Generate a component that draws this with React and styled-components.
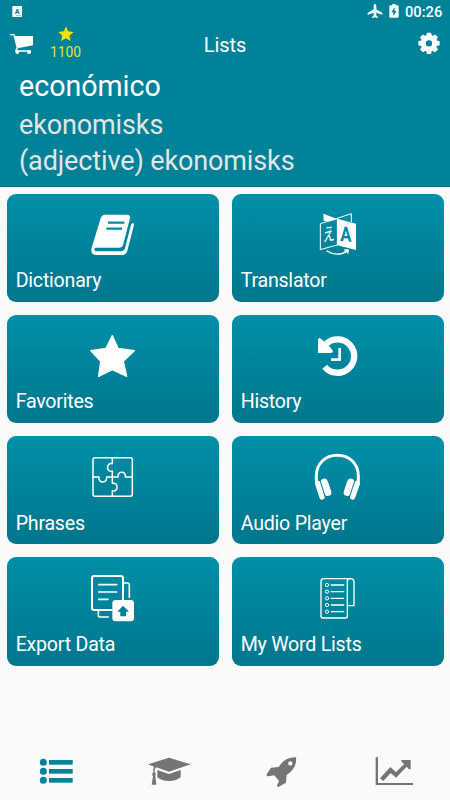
import React from "react";
import styled, { createGlobalStyle } from "styled-components";

const GlobalStyle = createGlobalStyle`
  body {
    margin: 0;
    background: #fafafa;
    font-family: Roboto, sans-serif;
  }
  svg {
    display: block;
  }
`;

const Screen = styled.div`
  width: 450px;
  height: 800px;
  display: flex;
  flex-direction: column;
  overflow: hidden;
  background: #fafafa;
`;

const Header = styled.header`
  height: 187px;
  box-sizing: border-box;
  background: #008299;
  border-bottom: 1px solid #00728c;
  color: #fff;
`;

const StatusBar = styled.div`
  height: 24px;
  box-sizing: border-box;
  padding: 0 7px 0 10px;
  display: flex;
  align-items: center;
  justify-content: space-between;
`;

const StatusIcons = styled.div`
  display: flex;
  align-items: center;
  gap: 3px;
`;

const Clock = styled.span`
  width: 38px;
  font-size: 14.7px;
  font-weight: 500;
  line-height: 24px;
  white-space: nowrap;
`;

const Toolbar = styled.div`
  height: 42px;
  display: grid;
  grid-template-columns: 100px 1fr 100px;
`;

const ToolbarLeft = styled.div`
  display: flex;
`;

const Points = styled.div`
  width: 41px;
  display: flex;
  flex-direction: column;
  align-items: center;
  color: #f0df35;
  font-size: 13.8px;
  line-height: 17px;
`;

const Title = styled.h1`
  margin: 0;
  text-align: center;
  font-size: 20px;
  font-weight: 400;
  letter-spacing: -0.1px;
  line-height: 42px;
`;

const ToolbarRight = styled.div`
  display: flex;
  justify-content: flex-end;
`;

const Word = styled.div`
  padding-left: 19px;
  font-size: 28.6px;
  line-height: 41px;
`;

const Meaning = styled.div`
  padding-left: 19px;
  color: #e2e6e7;
  font-size: 27px;
  letter-spacing: -0.13px;
  line-height: 36px;
`;

const Grid = styled.main`
  flex: 1;
  padding: 6.6px 6.5px 0;
  display: grid;
  grid-template-columns: 1fr 1fr;
  grid-auto-rows: 108.3px;
  gap: 13px;
`;

const Tile = styled.div`
  box-sizing: border-box;
  padding-top: 10.6px;
  display: flex;
  flex-direction: column;
  align-items: center;
  border-radius: 9px;
  background: linear-gradient(#008fa9, #00778c);
  color: #fff;
`;

const TileLabel = styled.div`
  align-self: stretch;
  padding: 4px 0 0 9.2px;
  font-size: 19.6px;
  letter-spacing: -0.23px;
  line-height: 26px;
`;

const NavBar = styled.nav`
  height: 56px;
  display: grid;
  grid-template-columns: repeat(4, 1fr);
`;

const NavItem = styled.div`
  display: flex;
  justify-content: center;
  color: ${({ $active }) => ($active ? "#008299" : "#757575")};
`;

const TileIcon = ({ top = 0, children }) => (
  <svg
    width="65"
    height="60"
    viewBox={`0 ${top} 195 180`}
    fill="none"
    stroke="#fff"
    strokeLinejoin="round"
    strokeLinecap="round"
  >
    {children}
  </svg>
);

const NavIcon = ({ left, children }) => (
  <svg
    width="60"
    height="56"
    viewBox={`${left} 12 180 168`}
    fill="currentColor"
    stroke="none"
  >
    {children}
  </svg>
);

const DictionaryIcon = () => (
  <TileIcon top={-2}>
    <path
      d="M75 30H141Q152 30 150 41L129 122Q127 129 119 129H48Q43 129 43 134Q43 140 50 140H123Q132 140 135 131L152 65Q154 55 160 55Q163 57 161 65L142 138Q138 151 126 151H48Q31 149 34 132L62 41Q65 31 75 30Z"
      fill="#fff"
      stroke="none"
    />
    <path
      d="M84 54H133M79 72H126"
      stroke="#008ba4"
      strokeWidth="7"
      strokeLinecap="butt"
    />
  </TileIcon>
);

const TranslatorIcon = () => (
  <TileIcon top={-2}>
    <path d="M55 27L94 42L80 49H56Z" fill="#fff" stroke="none" />
    <path d="M97 42L153 57V136L97 122Z" fill="#fff" stroke="none" />
    <path d="M96 42L46 57V135L96 121Z" strokeWidth="3" />
    <path d="M97 41L139 27V51" strokeWidth="3" />
    <text
      transform="matrix(.82 .05 0 1 106 109)"
      fill="#00869e"
      stroke="none"
      fontFamily="Roboto, sans-serif"
      fontSize="61"
      fontWeight="700"
    >
      A
    </text>
    <text
      transform="matrix(.82 -.18 0 1.2 53 112)"
      fill="#fff"
      stroke="none"
      fontFamily="'Noto Sans CJK JP', sans-serif"
      fontSize="45"
    >
      え
    </text>
    <path d="M66 139Q98 159 130 137M119 136L130 136L128 145" strokeWidth="4" />
  </TileIcon>
);

const FavoritesIcon = () => (
  <TileIcon top={0}>
    <path
      d="M97 32L114 70L163 77L130 109L140 154L97 134L56 154L62 109L32 77L78 70Z"
      fill="#fff"
      strokeWidth="4"
    />
  </TileIcon>
);

const HistoryIcon = () => (
  <TileIcon top={0}>
    <path
      d="M64 56A50 50 0 1 1 59 125"
      strokeWidth="19"
      strokeLinecap="butt"
    />
    <path
      d="M39 44Q41 35 49 42L56 48L69 59L82 75Q87 84 76 84H39Z"
      fill="#fff"
      stroke="none"
    />
    <path
      d="M104 69V104H78"
      strokeWidth="8"
      strokeLinecap="butt"
      strokeLinejoin="miter"
    />
  </TileIcon>
);

const PhrasesIcon = () => (
  <TileIcon>
    <rect x="39" y="32" width="118" height="116" rx="6" strokeWidth="4.5" />
    <path
      d="M97 32V50C78 45 78 78 97 72V90H114C111 71 140 71 136 90H157M97 90V109C116 104 116 137 97 131V148M97 90H80C83 110 53 110 57 90H39"
      strokeWidth="4.5"
    />
  </TileIcon>
);

const AudioIcon = () => (
  <TileIcon>
    <path d="M34 102V87C34 50 61 25 97 25S160 50 160 87V102" strokeWidth="9" />
    <path d="M38 109L51 150M157 109L143 150" strokeWidth="16" />
    <path d="M58 106L68 136M137 106L127 136" strokeWidth="22" />
    <path
      d="M46 102L61 150M149 102L133 150"
      stroke="#008098"
      strokeWidth="2.5"
    />
  </TileIcon>
);

const ExportIcon = () => (
  <TileIcon>
    <path
      d="M95 126H42Q36 126 36 120V31Q36 24 43 24H122Q129 24 129 31V95"
      strokeWidth="6"
    />
    <path
      d="M131 45H142Q148 45 148 51V88M55 128V142Q55 147 60 147H85"
      strokeWidth="5"
    />
    <path d="M56 50H110M56 72H110M56 94H84" strokeWidth="5" />
    <rect x="97" y="96" width="65" height="64" rx="10" fill="#fff" stroke="none" />
    <path
      d="M129 113L147 131H138V145H121V131H112Z"
      fill="#007f96"
      stroke="none"
    />
  </TileIcon>
);

const WordListsIcon = () => (
  <TileIcon>
    <path
      d="M127 38V144Q127 150 121 150H54Q48 150 48 144V41Q48 32 57 32H136Q147 32 147 43V113H128M127 40Q127 32 135 32"
      strokeWidth="4"
    />
    {[51, 71, 91, 111, 131].map((y) => (
      <React.Fragment key={y}>
        <circle cx="66" cy={y} r="5" strokeWidth="3" />
        <path d={`M79 ${y}H116`} strokeWidth="4" />
      </React.Fragment>
    ))}
  </TileIcon>
);

const tiles = [
  { label: "Dictionary", Icon: DictionaryIcon },
  { label: "Translator", Icon: TranslatorIcon },
  { label: "Favorites", Icon: FavoritesIcon },
  { label: "History", Icon: HistoryIcon },
  { label: "Phrases", Icon: PhrasesIcon },
  { label: "Audio Player", Icon: AudioIcon },
  { label: "Export Data", Icon: ExportIcon },
  { label: "My Word Lists", Icon: WordListsIcon },
];

const NotificationIcon = () => (
  <svg width="14" height="24" viewBox="30 0 42 72">
    <rect x="37" y="18" width="29" height="33" rx="2" fill="#fff" />
    <text
      x="44"
      y="42"
      fill="#00728a"
      fontFamily="Roboto, sans-serif"
      fontSize="21"
      fontWeight="700"
    >
      A
    </text>
    <path d="M49 47H63" stroke="#00728a" strokeWidth="2" strokeDasharray="4 2" />
  </svg>
);

// airplane mode and charging battery
const SystemIcons = () => (
  <svg width="35" height="24" viewBox="51 0 105 72" fill="#fff">
    <path d="M75 12Q79 12 79 17V28L97 39V44L79 38V47L84 51V54L75 52L66 54V51L71 47V38L53 44V39L71 28V17Q71 12 75 12Z" />
    <path d="M127 12H137V16H143Q146 16 146 19V50Q146 53 143 53H121Q118 53 118 50V19Q118 16 121 16H127Z" />
    <path d="M134 22V33H140L130 48V37H124Z" fill="#008299" />
  </svg>
);

const CartIcon = () => (
  <svg width="45" height="42" viewBox="0 72 135 126">
    <path
      d="M32 104H42L52 145Q46 149 48 153H91"
      fill="none"
      stroke="#fff"
      strokeWidth="4"
      strokeLinecap="round"
      strokeLinejoin="round"
    />
    <path d="M44 108H99V136L53 145Z" fill="#fff" />
    <circle cx="52" cy="156" r="6" fill="#fff" />
    <circle cx="87" cy="156" r="6" fill="#fff" />
  </svg>
);

const PointsStar = () => (
  <svg width="20" height="20" viewBox="166 72 60 60">
    <path
      d="M196 79L202 94L219 96L206 107L210 123L196 115L181 123L185 107L173 96L190 94Z"
      fill="#ffe100"
    />
  </svg>
);

const GearIcon = () => (
  <svg width="45" height="42" viewBox="165 72 135 126">
    <g transform="translate(237 130)">
      {[0, 45, 90, 135, 180, 225, 270, 315].map((angle) => (
        <path
          key={angle}
          d="M-9 -21L-6 -32H6L9 -21Z"
          transform={`rotate(${angle})`}
          fill="#fff"
        />
      ))}
      <circle r="17" fill="none" stroke="#fff" strokeWidth="15" />
    </g>
  </svg>
);

const App = () => {
  return (
    <Screen>
      <GlobalStyle />
      <Header>
        <StatusBar>
          <NotificationIcon />
          <StatusIcons>
            <SystemIcons />
            <Clock>00:26</Clock>
          </StatusIcons>
        </StatusBar>
        <Toolbar>
          <ToolbarLeft>
            <CartIcon />
            <Points>
              <PointsStar />
              1100
            </Points>
          </ToolbarLeft>
          <Title>Lists</Title>
          <ToolbarRight>
            <GearIcon />
          </ToolbarRight>
        </Toolbar>
        <Word>económico</Word>
        <Meaning>ekonomisks</Meaning>
        <Meaning>(adjective) ekonomisks</Meaning>
      </Header>
      <Grid>
        {tiles.map(({ label, Icon }) => (
          <Tile key={label}>
            <Icon />
            <TileLabel>{label}</TileLabel>
          </Tile>
        ))}
      </Grid>
      <NavBar>
        <NavItem $active>
          <NavIcon left={78}>
            {[67, 94, 121].map((y) => (
              <React.Fragment key={y}>
                <circle cx="130" cy={y} r="10.5" />
                <path d={`M147 ${y - 7}H218V${y + 7}H147Z`} />
              </React.Fragment>
            ))}
          </NavIcon>
        </NavItem>
        <NavItem>
          <NavIcon left={416}>
            <path d="M506 53L571 73L506 95L468 82Q462 86 463 96Q468 101 465 108L468 134H454L458 109Q453 103 459 97Q458 86 461 80L443 73Z" />
            <path d="M471 90L506 102L541 90V112Q529 123 506 123T471 112Z" />
          </NavIcon>
        </NavItem>
        <NavItem>
          <NavIcon left={79}>
            <path
              fillRule="evenodd"
              d="M214 52Q218 84 186 105L184 128L161 141Q155 139 158 134L163 123L149 106L132 109Q124 109 126 103L139 83L162 81Q181 50 214 52ZM197 64A6 6 0 1 0 197 77A6 6 0 1 0 197 64Z"
            />
          </NavIcon>
        </NavItem>
        <NavItem>
          <NavIcon left={416}>
            <path d="M451 52H458V129H563V135H451Z" />
            <path d="M464 115L495 81L512 96L536 73L528 64V60H556V87L551 88L544 80L512 113L496 99L474 123Z" />
          </NavIcon>
        </NavItem>
      </NavBar>
    </Screen>
  );
};

export default App;
